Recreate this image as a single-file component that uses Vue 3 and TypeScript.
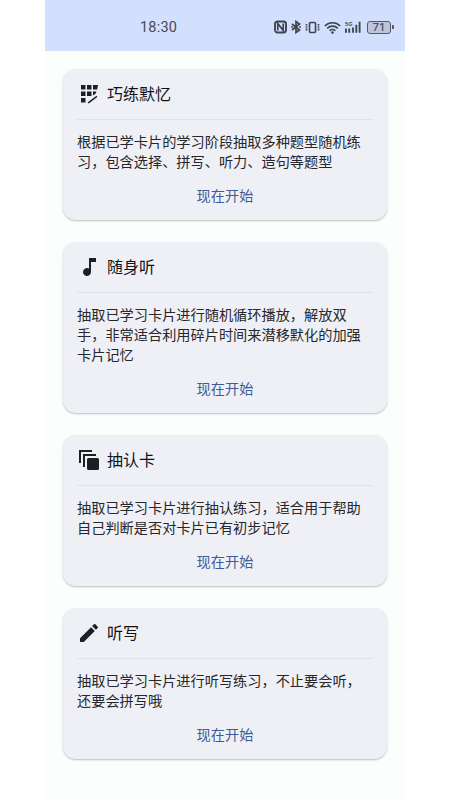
<script setup lang="ts">
interface Item { title: string; desc: string; icon: string }
const items: Item[] = [
  { title: '巧练默忆', desc: '根据已学卡片的学习阶段抽取多种题型随机练习，包含选择、拼写、听力、造句等题型', icon: 'quiz' },
  { title: '随身听', desc: '抽取已学习卡片进行随机循环播放，解放双手，非常适合利用碎片时间来潜移默化的加强卡片记忆', icon: 'music' },
  { title: '抽认卡', desc: '抽取已学习卡片进行抽认练习，适合用于帮助自己判断是否对卡片已有初步记忆', icon: 'cards' },
  { title: '听写', desc: '抽取已学习卡片进行听写练习，不止要会听，还要会拼写哦', icon: 'pen' },
]
</script>

<template>
  <div class="page">
    <div class="phone">
      <header class="status">
        <span class="time">18:30</span>
        <div class="status-icons">
          <svg width="13" height="14" viewBox="0 0 13 13"><rect x="1" y="1" width="11" height="11" rx="2.5" fill="none" stroke="#3f4450" stroke-width="1.900"/><path d="M3.800 10V3l5.400 7V3" fill="none" stroke="#3f4450" stroke-width="1.700"/></svg>
          <svg width="10" height="14" viewBox="0 0 10 13"><path d="M1 3.500l7.500 6L5 12V1l3.500 2.500L1 9.500" fill="none" stroke="#3f4450" stroke-width="1.700"/><circle cx="1" cy="6.500" r=".9" fill="#3f4450"/><circle cx="9" cy="6.500" r=".9" fill="#3f4450"/></svg>
          <svg width="15" height="13" viewBox="0 0 15 12"><rect x="4.500" y="1" width="6" height="10" rx="1" fill="none" stroke="#3f4450" stroke-width="1.600"/><path d="M1.500 2.500v7M13.500 2.500v7" stroke="#3f4450" stroke-width="1.600" stroke-dasharray="1.500 .7"/></svg>
          <svg width="17" height="13" viewBox="0 0 16 12"><path d="M.8 4.500a10.200 10.200 0 0 1 14.400 0M3 6.800a7 7 0 0 1 10 0M5.300 9a3.800 3.800 0 0 1 5.400 0" fill="none" stroke="#3f4450" stroke-width="1.500"/><circle cx="8" cy="10.800" r="1.200" fill="#3f4450"/></svg>
          <svg width="16" height="14" viewBox="0 0 17 13"><text x="0" y="5.500" font-size="6" font-weight="700" fill="#3f4450" font-family="Liberation Sans, sans-serif">5G</text><path d="M0 8h2v4.500H0zM3.500 8h2v4.500h-2zM7.500 7h2v5.500h-2zM11 4h2v8.500h-2zM14.500 1h2v11.500h-2z" fill="#3f4450"/></svg>
          <div class="battery"><span class="battery-body">71</span><span class="battery-tip"></span></div>
        </div>
      </header>
      <main class="list">
        <section v-for="item in items" :key="item.title" class="card">
          <div class="card-head">
            <svg v-if="item.icon === 'quiz'" class="icon" viewBox="0 0 24 24"><path d="M4 3h4.500v4.500H4zM10 3h4.500v4.500H10zM16 3h5l-.800 4.500H16zM4 9.500h4.500V14H4zM10 9.500h4.500V14H10zM16 9.500h3.500l-.800 2L16 13.500zM4 16h4.500v4.500H4zM10.500 20.500l9-6.800.800 1.400-8.500 6.400z"/></svg>
            <svg v-else-if="item.icon === 'music'" class="icon" viewBox="0 0 24 24"><path d="M12 3v10.550A4 4 0 1 0 14 17V7h5V3h-7z"/></svg>
            <svg v-else-if="item.icon === 'cards'" class="icon" viewBox="0 0 24 24"><path d="M2 2h13v2H4v11H2zM6 6h13v2H8v11H6zM11.500 10h9A1.500 1.500 0 0 1 22 11.500v9a1.500 1.500 0 0 1-1.500 1.500h-9a1.500 1.500 0 0 1-1.500-1.500v-9a1.500 1.500 0 0 1 1.500-1.500z"/></svg>
            <svg v-else class="icon" viewBox="0 0 24 24"><path d="M3 17.250V21h3.750L17.810 9.940l-3.750-3.750L3 17.250zM20.710 7.040a1 1 0 0 0 0-1.410l-2.340-2.340a1 1 0 0 0-1.410 0l-1.830 1.830 3.750 3.750 1.830-1.830z"/></svg>
            <h2 class="title">{{ item.title }}</h2>
          </div>
          <p class="desc">{{ item.desc }}</p>
          <div class="action">现在开始</div>
        </section>
      </main>
    </div>
  </div>
</template>

<style scoped>
.page { width: 450px; height: 800px; background: #fff; display: flex; justify-content: center; font-family: "Noto Sans CJK SC", "Noto Sans", sans-serif; overflow: hidden; }
.phone { width: 360px; background: #fcfefe; display: flex; flex-direction: column; }
.status { height: 51px; background: #d3e0fd; position: relative; display: flex; align-items: center; flex-shrink: 0; }
.time { position: absolute; left: 95px; top: 19px; font: 14.500px/18px Roboto, sans-serif; color: #454a57; letter-spacing: .2px; }
.status-icons { position: absolute; left: 229px; top: 20px; display: flex; align-items: center; gap: 4px; height: 14px; }
.battery { display: flex; align-items: center; margin-left: 2px; }
.battery-body { width: 22px; height: 11px; border: 1px solid #555a66; border-radius: 3px; background: #bcc5d9; font: 11.500px/11px Roboto, sans-serif; color: #333844; text-align: center; }
.battery-tip { width: 1.500px; height: 4px; background: #555a66; margin-left: 1px; border-radius: 0 1px 1px 0; }
.list { padding: 18px 18px 0; display: flex; flex-direction: column; gap: 22px; }
.card { background: #eff0f6; border-radius: 13px; padding: 0 14px 14px; box-shadow: 0 1px 2px rgba(0, 0, 0, .25); }
.card-head { height: 51px; display: flex; align-items: center; gap: 6px; border-bottom: 1px solid #e2e3e9; padding-bottom: 3px; box-sizing: border-box; }
.icon { width: 24px; height: 24px; fill: #1e1f23; flex-shrink: 0; margin-top: 2px; }
.title { margin: 0; font-size: 16px; font-weight: 400; color: #111216; line-height: 22px; }
.desc { margin: 11px 0 0; font-size: 14.200px; line-height: 20px; color: #26272b; }
.action { margin-top: 13px; height: 22px; line-height: 22px; font-size: 14.200px; color: #3f5a97; text-align: center; }
</style>
